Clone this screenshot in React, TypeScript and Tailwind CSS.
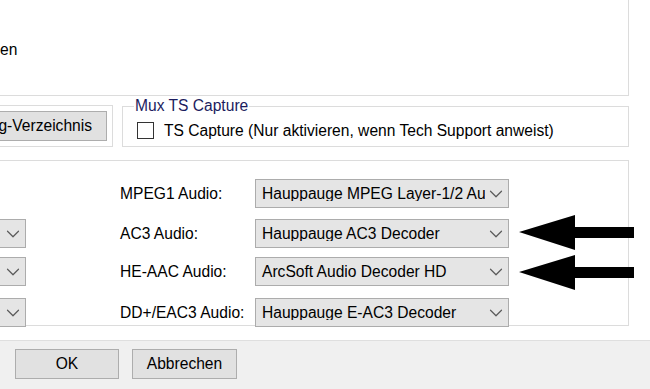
import { ChevronDown } from 'lucide-react';

const rows = [
  { label: 'MPEG1 Audio:', value: 'Hauppauge MPEG Layer-1/2 Audio Decoder', left: false, mt: 'mt-[18px]' },
  { label: 'AC3 Audio:', value: 'Hauppauge AC3 Decoder', left: true, mt: 'mt-[11px]' },
  { label: 'HE-AAC Audio:', value: 'ArcSoft Audio Decoder HD', left: true, mt: 'mt-[9px]' },
  { label: 'DD+/EAC3 Audio:', value: 'Hauppauge E-AC3 Decoder', left: true, mt: 'mt-[12px]' },
];

function Combo({ value, className }: { value: string; className: string }) {
  return (
    <div className={`h-[29px] bg-[#e5e5e5] border border-[#acacac] flex items-center ${className}`}>
      {value && <span className="flex-1 pl-[6px] overflow-hidden whitespace-nowrap text-[15.6px] leading-none">{value}</span>}
      <ChevronDown size={22} strokeWidth={1.3} className="text-[#5a5a5a] mr-[1px] ml-auto shrink-0" />
    </div>
  );
}

function Arrow() {
  return (
    <svg width="116" height="35" viewBox="0 0 116 35" className="block">
      <polygon points="0,17 56,0 56,12 115,12 115,23 56,23 56,35" fill="#000" />
    </svg>
  );
}

export default function App() {
  return (
    <div className="w-[650px] h-[389px] bg-white overflow-hidden relative text-black" style={{ fontFamily: '"Liberation Sans", Arial, sans-serif' }}>
      <div className="h-[96px] w-[629px] border-r border-b border-[#dcdcdc] pt-[38px]">
        <span className="text-[15.6px] leading-[18px]">en</span>
      </div>

      <div className="flex mt-[9px] h-[42px]">
        <div className="w-[113px] border-t border-r border-b border-[#dcdcdc] flex items-center justify-end pr-[5px]">
          <button className="w-[160px] h-[30px] bg-[#e1e1e1] border border-[#adadad] text-[15.6px] flex items-center justify-end pr-[14px] shrink-0">
            Log-Verzeichnis
          </button>
        </div>
        <fieldset className="ml-[9px] w-[507px] border border-[#dcdcdc] -mt-[9px] px-[14px]">
          <legend className="ml-[-3px] px-[1px] text-[15.6px] leading-[20px] text-[#1c1c5e]">Mux TS Capture</legend>
          <label className="flex items-center mt-[3px]">
            <span className="w-[17px] h-[17px] border border-[#333] bg-white shrink-0" />
            <span className="ml-[10px] text-[15.6px]">TS Capture (Nur aktivieren, wenn Tech Support anweist)</span>
          </label>
        </fieldset>
      </div>

      <div className="mt-[13px] w-[629px] h-[166px] border-t border-r border-b border-[#dcdcdc] flex flex-col">
        {rows.map(r => (
          <div key={r.label} className={`flex items-center ${r.mt}`}>
            <div className="w-[26px] shrink-0">
              {r.left && <Combo value="" className="-ml-[10px] w-[36px]" />}
            </div>
            <span className="ml-[94px] w-[135px] text-[15.6px]">{r.label}</span>
            <Combo value={r.value} className="w-[254px]" />
          </div>
        ))}
      </div>

      <div className="absolute left-[519px] top-[215px] flex flex-col gap-[5px]">
        <Arrow />
        <Arrow />
      </div>

      <div className="mt-[14px] h-[49px] bg-[#f0f0f0] border-t border-[#dfdfdf] flex items-start pt-[8px] pl-[15px] gap-[13px]">
        <button className="w-[104px] h-[30px] bg-[#e1e1e1] border border-[#adadad] text-[15.6px]">OK</button>
        <button className="w-[105px] h-[30px] bg-[#e1e1e1] border border-[#adadad] text-[15.6px]">Abbrechen</button>
      </div>
    </div>
  );
}
